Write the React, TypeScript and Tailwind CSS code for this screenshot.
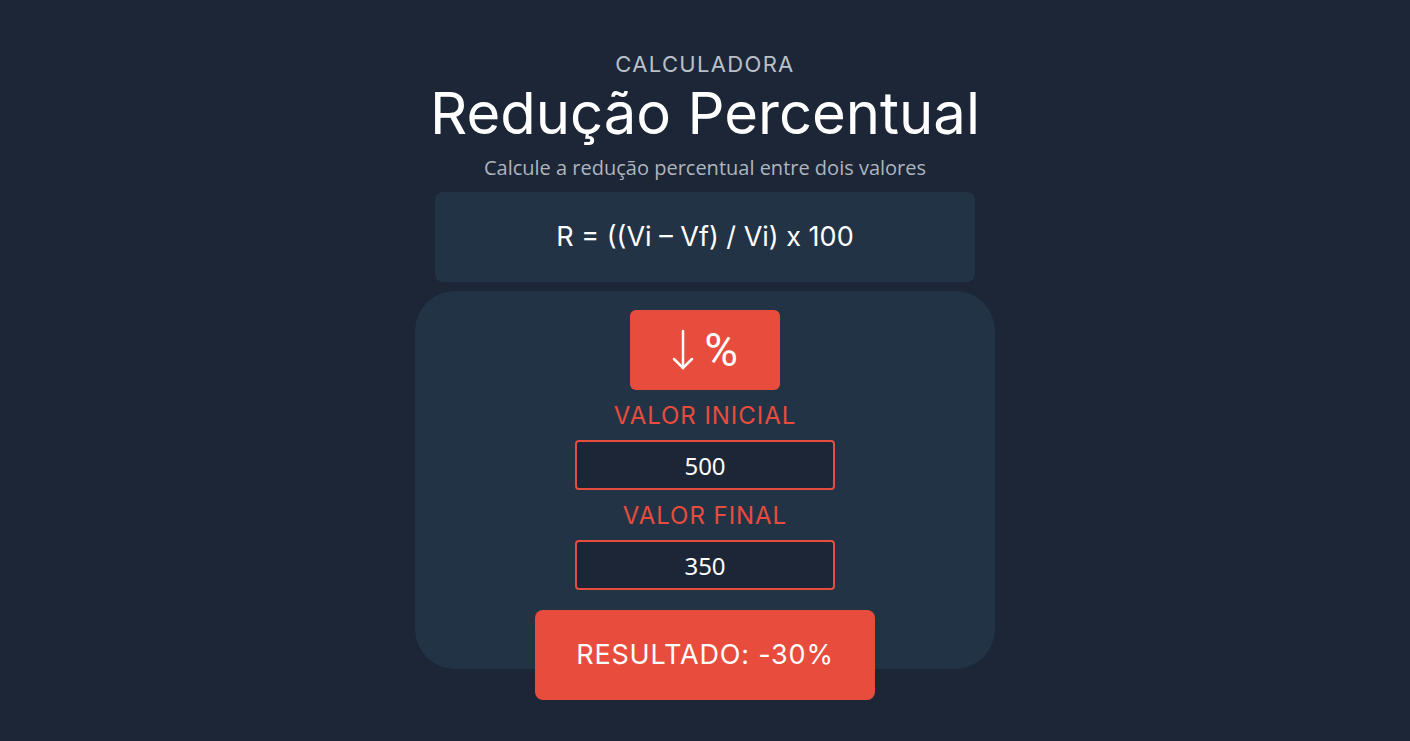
import { useState } from "react";

export default function App() {
  const [initial, setInitial] = useState("500");
  const [final, setFinal] = useState("350");

  const vi = parseFloat(initial);
  const vf = parseFloat(final);
  const result = vi ? Math.round(((vf - vi) / vi) * 100 * 100) / 100 : 0;

  return (
    <div className="min-h-screen bg-[#1c2637] flex flex-col items-center pt-[50px] font-['Inter',sans-serif]">
      {/* Header */}
      <p className="text-[22px] leading-[28px] text-[#b9c0ca] tracking-[0.06em]">CALCULADORA</p>
      <h1 className="text-[58px] leading-[70px] text-white font-normal">Redução Percentual</h1>
      <p className="mt-[6px] text-[20px] leading-[28px] text-[#aeb5bf] font-['Open_Sans','Noto_Sans',sans-serif]">
        Calcule a redução percentual entre dois valores
      </p>

      {/* Formula */}
      <div className="mt-[10px] w-[540px] h-[90px] rounded-lg bg-[#233346] flex items-center justify-center">
        <span className="text-[27px] text-white">R = ((Vi – Vf) / Vi) x 100</span>
      </div>

      {/* Calculator card */}
      <div className="mt-[9px] w-[580px] h-[378px] rounded-[40px] bg-[#233346] flex flex-col items-center pt-[19px]">
        <div className="shrink-0 w-[150px] h-[80px] rounded-md bg-[#e74c3c] flex items-center justify-center gap-[10px] text-white">
          <svg width="22" height="42" viewBox="0 0 22 42" fill="none" stroke="white" strokeWidth="2.5" strokeLinecap="round">
            <path d="M11 2 V39" />
            <path d="M2 30 L11 39 L20 30" />
          </svg>
          <span className="font-['Roboto',sans-serif] text-[46px] leading-none">%</span>
        </div>

        <label className="shrink-0 mt-[12px] text-[24px] leading-[28px] text-[#e74c3c] tracking-[0.04em]">
          VALOR INICIAL
        </label>
        <input
          value={initial}
          onChange={(e) => setInitial(e.target.value)}
          className="shrink-0 mt-[10px] w-[260px] h-[50px] rounded border-2 border-[#e74c3c] bg-[#1c2637] text-center text-[24px] text-white outline-none font-['Noto_Sans',sans-serif]"
        />

        <label className="shrink-0 mt-[12px] text-[24px] leading-[28px] text-[#e74c3c] tracking-[0.04em]">
          VALOR FINAL
        </label>
        <input
          value={final}
          onChange={(e) => setFinal(e.target.value)}
          className="shrink-0 mt-[10px] w-[260px] h-[50px] rounded border-2 border-[#e74c3c] bg-[#1c2637] text-center text-[24px] text-white outline-none font-['Noto_Sans',sans-serif]"
        />

        <button className="shrink-0 mt-[20px] w-[340px] h-[90px] rounded-lg bg-[#e74c3c] text-white text-[27px] tracking-[0.03em]">
          RESULTADO: {result}%
        </button>
      </div>
    </div>
  );
}
